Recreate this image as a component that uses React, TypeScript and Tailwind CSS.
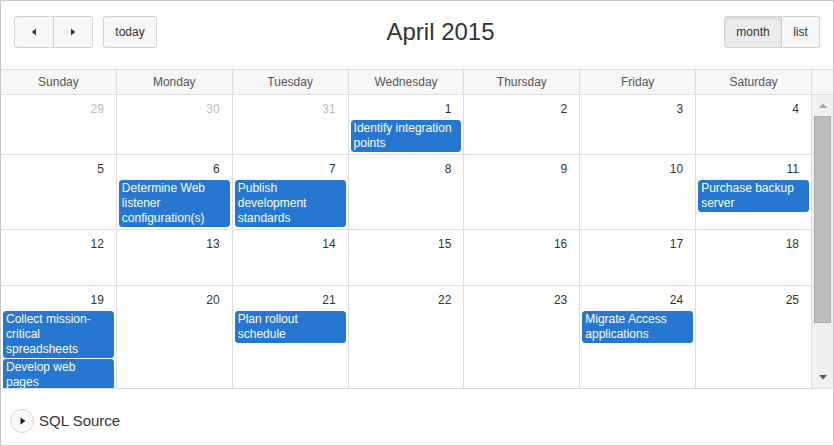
type Day = { n: number; other?: boolean; events?: string[] }
type Week = { h: string; days: Day[] }

const DIAS = ['Sunday', 'Monday', 'Tuesday', 'Wednesday', 'Thursday', 'Friday', 'Saturday']

const SEMANAS: Week[] = [
  {
    h: 'h-[60px]',
    days: [
      { n: 29, other: true },
      { n: 30, other: true },
      { n: 31, other: true },
      { n: 1, events: ['Identify integration points'] },
      { n: 2 },
      { n: 3 },
      { n: 4 },
    ],
  },
  {
    h: 'h-[75px]',
    days: [
      { n: 5 },
      { n: 6, events: ['Determine Web listener configuration(s)'] },
      { n: 7, events: ['Publish development standards'] },
      { n: 8 },
      { n: 9 },
      { n: 10 },
      { n: 11, events: ['Purchase backup server'] },
    ],
  },
  {
    h: 'h-[56px]',
    days: [{ n: 12 }, { n: 13 }, { n: 14 }, { n: 15 }, { n: 16 }, { n: 17 }, { n: 18 }],
  },
  {
    h: 'h-[102px]',
    days: [
      { n: 19, events: ['Collect mission-critical spreadsheets', 'Develop web pages'] },
      { n: 20 },
      { n: 21, events: ['Plan rollout schedule'] },
      { n: 22 },
      { n: 23 },
      { n: 24, events: ['Migrate Access applications'] },
      { n: 25 },
    ],
  },
]

function Boton({ children, activo = false, className = '' }: { children: React.ReactNode; activo?: boolean; className?: string }) {
  return (
    <button
      className={`h-[32px] flex items-center justify-center border border-[#d2d2d2] text-[12px] text-[#333] ${
        activo ? 'bg-[#ebebeb] shadow-[inset_0_2px_3px_rgba(0,0,0,0.08)]' : 'bg-[#f7f7f7]'
      } ${className}`}
    >
      {children}
    </button>
  )
}

function Flecha({ dir }: { dir: 'left' | 'right' }) {
  return (
    <svg width="6" height="8" viewBox="0 0 6 8">
      {dir === 'left' ? <path d="M5 0.5 L0.8 4 L5 7.5 Z" fill="#333" /> : <path d="M1 0.5 L5.2 4 L1 7.5 Z" fill="#333" />}
    </svg>
  )
}

export default function App() {
  return (
    <div className="w-[834px] h-[446px] border border-[#c6c6c6] bg-white font-['Liberation_Sans',Arial,sans-serif] flex flex-col overflow-hidden">
      {/* barra de herramientas */}
      <div className="h-[68px] shrink-0 flex items-start justify-between px-[13px] pt-[15px]">
        <div className="flex items-center gap-[10px]">
          <div className="flex">
            <Boton className="w-[40px] rounded-l-[3px]">
              <Flecha dir="left" />
            </Boton>
            <Boton className="w-[40px] -ml-px rounded-r-[3px]">
              <Flecha dir="right" />
            </Boton>
          </div>
          <Boton className="w-[54px] rounded-[3px]">today</Boton>
        </div>
        <h2 className="text-[24px] leading-[32px] text-[#333]">April 2015</h2>
        <div className="flex">
          <Boton activo className="w-[58px] rounded-l-[3px]">month</Boton>
          <Boton className="w-[39px] -ml-px rounded-r-[3px]">list</Boton>
        </div>
      </div>

      {/* cabecera de días */}
      <div className="h-[26px] shrink-0 flex border-y border-[#ddd] bg-[#f7f7f7]">
        <div className="flex-1 grid grid-cols-7">
          {DIAS.map(d => (
            <div key={d} className="border-r border-[#ddd] flex items-center justify-center text-[12px] text-[#555]">
              {d}
            </div>
          ))}
        </div>
        <div className="w-[21px]" />
      </div>

      {/* cuerpo con scroll */}
      <div className="h-[293px] shrink-0 flex overflow-hidden">
        <div className="flex-1 overflow-hidden">
          {SEMANAS.map((s, i) => (
            <div key={i} className={`${s.h} grid grid-cols-7 ${i < SEMANAS.length - 1 ? 'border-b' : ''} border-[#ddd]`}>
              {s.days.map((d, j) => (
                <div key={j} className="border-r border-[#ddd] overflow-hidden">
                  <div className={`text-right pr-[12px] pt-[7px] text-[12px] leading-[14px] ${d.other ? 'text-[#bbb]' : 'text-[#333]'}`}>
                    {d.n}
                  </div>
                  <div className="mt-[4px] flex flex-col gap-[1px]">
                    {d.events?.map(e => (
                      <div key={e} className="mx-[2px] rounded-[3px] bg-[#2577d2] border border-[#2577d2] pl-[2px] pr-[2px] text-[12px] leading-[15px] text-white">
                        {e}
                      </div>
                    ))}
                  </div>
                </div>
              ))}
            </div>
          ))}
        </div>
        {/* barra de scroll */}
        <div className="w-[21px] bg-[#f0f0f0] flex flex-col items-center">
          <div className="h-[21px] flex items-center justify-center">
            <svg width="8" height="5" viewBox="0 0 8 5">
              <path d="M0 5 L4 0.5 L8 5 Z" fill="#a3a3a3" />
            </svg>
          </div>
          <div className="w-[17px] h-[207px] bg-[#bcbcbc] border border-[#acacac]" />
          <div className="flex-1" />
          <div className="h-[21px] flex items-center justify-center">
            <svg width="8" height="5" viewBox="0 0 8 5">
              <path d="M0 0 L4 4.5 L8 0 Z" fill="#5a5a5a" />
            </svg>
          </div>
        </div>
      </div>

      {/* pie */}
      <div className="flex-1 border-t border-[#ddd] flex items-start pl-[9px] pt-[20px] gap-[5px]">
        <button className="w-[24px] h-[24px] rounded-full border border-[#d4d4d4] bg-[#fafafa] flex items-center justify-center">
          <svg width="6" height="8" viewBox="0 0 6 8" className="ml-[1px]">
            <path d="M0.5 0.5 L5.5 4 L0.5 7.5 Z" fill="#222" />
          </svg>
        </button>
        <span className="text-[15px] leading-[24px] text-[#333]">SQL Source</span>
      </div>
    </div>
  )
}
